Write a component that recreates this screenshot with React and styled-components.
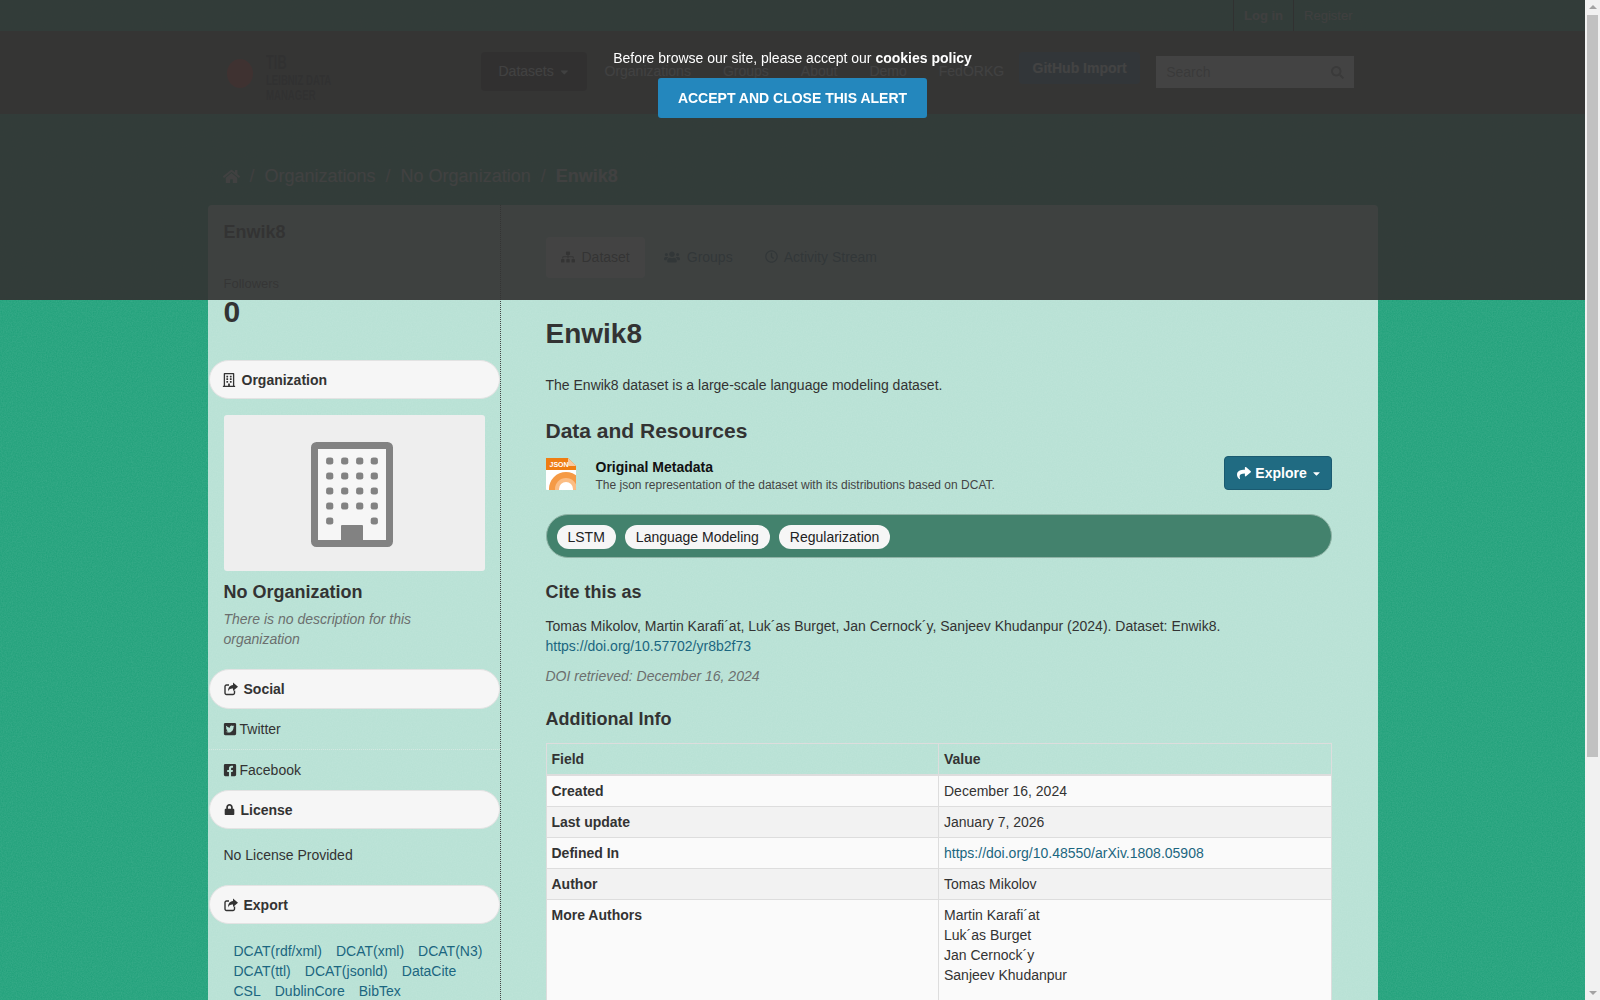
import React from "react";
import styled, { createGlobalStyle } from "styled-components";
import {
  FaHome,
  FaSitemap,
  FaUsers,
  FaRegClock,
  FaRegBuilding,
  FaTwitterSquare,
  FaFacebookSquare,
  FaLock,
  FaShare,
  FaSearch,
  FaCaretDown,
} from "react-icons/fa";

const noise = `url("data:image/svg+xml,%3Csvg xmlns='http://www.w3.org/2000/svg' width='200' height='200'%3E%3Cfilter id='n'%3E%3CfeTurbulence type='fractalNoise' baseFrequency='.8' numOctaves='2'/%3E%3CfeColorMatrix values='0 0 0 0 1 0 0 0 0 1 0 0 0 0 1 0 0 0 .12 0'/%3E%3C/filter%3E%3Crect width='200' height='200' filter='url(%23n)'/%3E%3C/svg%3E")`;

const GlobalStyle = createGlobalStyle`
  * { box-sizing: border-box; }
  body {
    margin: 0;
    padding-right: 15px;
    font-family: "Liberation Sans", Arial, sans-serif;
    font-size: 14px;
    line-height: 20px;
    color: #333;
    background-color: #1ea079;
    background-image: ${noise};
  }
  a { color: #1b6680; text-decoration: none; }
`;

const Container = styled.div`
  width: 1170px;
  margin: 0 auto;
`;

const ScrollTrack = styled.div`
  position: fixed;
  top: 0;
  right: 0;
  bottom: 0;
  width: 15px;
  z-index: 20;
  background: #f1f1f1;
`;
const ScrollThumb = styled.div`
  position: absolute;
  top: 15px;
  left: 2px;
  width: 11px;
  height: 742px;
  background: #c1c1c1;
`;
const ScrollArrow = styled.div`
  position: absolute;
  left: 3.5px;
  ${(props) => (props.$down ? "bottom: 5px;" : "top: 5px;")}
  width: 0;
  height: 0;
  border-left: 4px solid transparent;
  border-right: 4px solid transparent;
  ${(props) => (props.$down ? "border-top" : "border-bottom")}: 4px solid #a3a3a3;
`;

const Overlay = styled.div`
  position: fixed;
  top: 0;
  left: 0;
  right: 15px;
  height: 300px;
  z-index: 10;
  padding-top: 48px;
  display: flex;
  flex-direction: column;
  align-items: center;
  background: rgba(51, 51, 51, 0.92);
  color: #fff;
`;
const AcceptButton = styled.button`
  margin-top: 10px;
  height: 40px;
  padding: 0 20px;
  border: 0;
  border-radius: 3px;
  background: #2487bd;
  color: #fff;
  font: bold 14px "Liberation Sans", sans-serif;
  text-transform: uppercase;
`;

const TopBar = styled.div`
  height: 31px;
`;
const Account = styled(Container)`
  display: flex;
  justify-content: flex-end;
  padding-right: 15px;
`;
const AccountLink = styled.a`
  height: 31px;
  line-height: 31px;
  padding: 0 10px;
  border-left: 1px solid #222;
  font-size: 13px;
  font-weight: ${(props) => (props.$bold ? "bold" : "normal")};
  color: #ccc;
`;

const Masthead = styled.div`
  height: 83px;
  background: #4a4e49;
`;
const MastInner = styled(Container)`
  display: flex;
  align-items: flex-start;
  padding-top: 21px;
`;
const Logo = styled.div`
  width: 273px;
  padding-left: 19px;
  display: flex;
  align-items: flex-start;
  gap: 13px;
`;
const LogoMark = styled.div`
  width: 26px;
  height: 29px;
  margin-top: 7px;
  border-radius: 50%;
  background: #c9281c;
`;
const LogoText = styled.div`
  display: flex;
  flex-direction: column;
  color: #1c1c1c;
  font-size: 15px;
  font-weight: bold;
  line-height: 15px;
  white-space: nowrap;
  transform: scaleX(0.64);
  transform-origin: left;
  b {
    font-size: 20px;
    line-height: 20px;
  }
`;
const Nav = styled.nav`
  display: flex;
  align-items: flex-start;
`;
const NavLink = styled.a`
  height: 39px;
  padding: 0 16px;
  line-height: 39px;
  color: #e4e4e4;
`;
const DropLink = styled(NavLink)`
  width: 106px;
  padding: 0 18px;
  margin-right: 2px;
  display: flex;
  align-items: center;
  gap: 6px;
  border-radius: 4px;
  background: #1f1616;
`;
const ImportButton = styled.a`
  width: 121px;
  height: 32px;
  margin-left: -1px;
  border-radius: 4px;
  background: #2b5e80;
  color: #fff;
  font-weight: bold;
  line-height: 32px;
  text-align: center;
`;
const SearchBox = styled.div`
  width: 198px;
  height: 32px;
  margin: 4px 0 0 16px;
  padding: 0 10px;
  display: flex;
  align-items: center;
  justify-content: space-between;
  background: #fff;
  color: #888;
  font-size: 14px;
`;

const Breadcrumb = styled(Container)`
  height: 91px;
  padding: 33px 0 0 15px;
  display: flex;
  align-items: center;
  gap: 10px;
  font-size: 18px;
  color: #e4e4e4;
`;
const Crumb = styled.span`
  font-weight: ${(props) => (props.$active ? "bold" : "normal")};
`;
const Slash = styled.span`
  color: #ccc;
`;

const Panel = styled(Container)`
  display: flex;
  border-radius: 4px 4px 0 0;
  background: rgba(255, 255, 255, 0.68);
`;
const Sidebar = styled.aside`
  width: 293px;
  flex: none;
  padding: 15px 0 30px 1px;
  border-right: 1px dotted #444;
`;
const DatasetName = styled.h2`
  margin: 0 15px;
  font-size: 18px;
  line-height: 24px;
`;
const FollowLabel = styled.div`
  margin: 30px 15px 0;
  font-size: 13px;
  color: #555;
`;
const FollowCount = styled.div`
  margin: 1px 15px 0;
  font-size: 30px;
  line-height: 34px;
  font-weight: bold;
`;
const Pill = styled.h3`
  height: ${(props) => props.$height || 39}px;
  margin: ${(props) => props.$top || 0}px 0 0;
  padding-left: ${(props) => props.$pad || 14}px;
  display: flex;
  align-items: center;
  gap: 6px;
  border: 1px solid #e3e3e3;
  border-radius: 20px;
  background: #f6f6f6;
  font-size: 14px;
  line-height: 20px;
`;
const OrgImage = styled.div`
  width: 261px;
  height: 156px;
  margin: 16px 0 0 15px;
  padding: 27px 0 0 87px;
  border-radius: 3px;
  background: #eee;
`;
const OrgName = styled.h3`
  margin: 9px 15px 0;
  font-size: 18px;
  line-height: 24px;
`;
const OrgText = styled.p`
  margin: 5px 15px 20px;
  font-style: italic;
  color: #6b6f6e;
`;
const SocialItem = styled.div`
  height: ${(props) => (props.$last ? 40 : 41)}px;
  padding: 10px 15px 0 14px;
  display: flex;
  gap: 3px;
  align-items: flex-start;
  line-height: 20px;
  border-bottom: ${(props) => (props.$last ? "0" : "1px dotted #d5e8e1")};
  svg {
    margin-top: 3px;
  }
`;
const LicenseText = styled.p`
  margin: 16px 15px 20px;
`;
const ExportLinks = styled.div`
  margin: 17px 15px 0 25px;
  display: flex;
  flex-wrap: wrap;
  column-gap: 14px;
`;

const Main = styled.main`
  flex: 1;
  padding: 32px 46px 0 45px;
`;
const Tabs = styled.ul`
  margin: 0;
  padding: 0;
  list-style: none;
  display: flex;
  gap: 4px;
`;
const Tab = styled.li`
  height: 41px;
  padding: 0 15px 2px ${(props) => props.$left || 15}px;
  display: flex;
  align-items: center;
  gap: ${(props) => props.$gap || 7}px;
  border-radius: 4px;
  background: ${(props) => (props.$active ? "#fff" : "none")};
  color: ${(props) => (props.$active ? "#444" : "#2a6478")};
`;
const Title = styled.h1`
  margin: 38px 0 0;
  font-size: 28px;
  line-height: 36px;
`;
const Lead = styled.p`
  margin: 23px 0 0;
`;
const SectionTitle = styled.h2`
  margin: 22px 0 0;
  font-size: 21px;
  line-height: 28px;
`;
const SubTitle = styled.h3`
  margin: ${(props) => props.$top}px 0 0;
  font-size: 18px;
  line-height: 24px;
`;
const Resource = styled.div`
  margin-top: 11px;
  height: 34px;
  display: flex;
  align-items: flex-start;
  justify-content: space-between;
`;
const ResourceInfo = styled.div`
  display: flex;
  gap: 20px;
  svg {
    margin-top: 2px;
  }
`;
const ResourceName = styled.div`
  font-weight: bold;
  color: #111;
  line-height: 20px;
  margin-top: 1px;
`;
const ResourceNote = styled.div`
  font-size: 12px;
  line-height: 16px;
  color: #444;
`;
const ExploreButton = styled.button`
  width: 108px;
  height: 34px;
  padding: 0 0 0 4px;
  display: flex;
  align-items: center;
  justify-content: center;
  gap: 4px;
  border: 1px solid #1a5a70;
  border-radius: 4px;
  background: #206b82;
  color: #fff;
  font: bold 14px "Liberation Sans", sans-serif;
`;
const TagBar = styled.div`
  height: 44px;
  margin-top: 24px;
  padding: 2px 10px 0;
  display: flex;
  align-items: center;
  gap: 9px;
  border: 1px solid #8fb3a6;
  border-radius: 22px;
  background: #43826d;
`;
const Tag = styled.span`
  height: 24px;
  padding: 0 11px;
  line-height: 24px;
  border-radius: 12px;
  background: #f6f6f6;
  color: #222;
`;
const Citation = styled.p`
  margin: 12px 0 0;
`;
const Retrieved = styled.p`
  margin: 10px 0 0;
  font-style: italic;
  color: #6b6f6e;
`;
const Table = styled.table`
  width: 786px;
  margin-top: 12px;
  border-collapse: collapse;
  table-layout: fixed;
`;
const Th = styled.th`
  padding: 5px;
  height: 31px;
  border: 1px solid #ddd;
  border-bottom-width: 2px;
  text-align: left;
`;
const Td = styled.td`
  padding: 5px;
  border: 1px solid #ddd;
  vertical-align: top;
  font-weight: ${(props) => (props.$head ? "bold" : "normal")};
`;
const Row = styled.tr`
  background: ${(props) => (props.$even ? "#f2f2f2" : "#fafafa")};
`;
const Footer = styled.footer`
  height: 90px;
  margin-top: 30px;
`;

function ShareIcon() {
  return (
    <svg width="14" height="14" viewBox="0 0 14 14">
      <path
        d="M10.5 8.5V11a1.5 1.5 0 0 1-1.5 1.5H2.5A1.5 1.5 0 0 1 1 11V4.5A1.5 1.5 0 0 1 2.5 3H5"
        fill="none"
        stroke="currentColor"
        strokeWidth="1.4"
      />
      <path d="M9 .5L14 4.7 9 9V6.5C6.5 6.3 5 7 4 9.5 4 6 5.5 3.3 9 3Z" fill="currentColor" />
    </svg>
  );
}

function BuildingPlaceholder() {
  const xs = [18.7, 33.7, 48.7, 63.3];
  const ys = [19, 34, 49, 64];
  const windows = [];
  ys.forEach((y) => xs.forEach((x) => windows.push([x, y])));
  windows.push([18.7, 79], [63.3, 79]);
  return (
    <svg width="82" height="105" viewBox="0 0 82 105">
      <rect x="3.5" y="3.5" width="75" height="98" rx="2" fill="#f6f6f6" stroke="#828282" strokeWidth="7" />
      {windows.map(([x, y]) => (
        <rect key={`${x}-${y}`} x={x - 3.6} y={y - 3.6} width="7.2" height="7.2" rx="2.4" fill="#828282" />
      ))}
      <rect x="30" y="83" width="22" height="22" rx="1" fill="#828282" />
    </svg>
  );
}

function JsonIcon() {
  return (
    <svg width="30" height="32" viewBox="0 0 30 32">
      <defs>
        <clipPath id="sheet">
          <rect x="0" y="12" width="30" height="20" rx="1" />
        </clipPath>
      </defs>
      <rect x="0" y="10" width="30" height="22" rx="1" fill="#fff" />
      <g clipPath="url(#sheet)">
        <circle cx="20" cy="31" r="17" fill="#f59a45" />
        <circle cx="20" cy="31" r="11" fill="#fbbd84" />
        <circle cx="20" cy="31" r="7" fill="#fff" />
      </g>
      <path d="M0 0H22L30 8V12H0Z" fill="#ef7d12" />
      <path d="M22 0L30 8H23Q22 8 22 7Z" fill="#f8c9a0" />
      <text x="3.5" y="8.5" fontSize="7" fontWeight="bold" fontFamily="Liberation Sans" fill="#fff">
        JSON
      </text>
    </svg>
  );
}

const rows = [
  ["Created", "December 16, 2024"],
  ["Last update", "January 7, 2026"],
  ["Defined In", <a href="#doi">https://doi.org/10.48550/arXiv.1808.05908</a>],
  ["Author", "Tomas Mikolov"],
  [
    "More Authors",
    <>
      Martin Karafi´at
      <br />
      Luk´as Burget
      <br />
      Jan Cernock´y
      <br />
      Sanjeev Khudanpur
      <br />
      &nbsp;
    </>,
  ],
  ["Source", <a href="#src">https://github.com/tomsercu/lstm</a>],
  ["Version", "1.0"],
  ["Language", "English"],
];

export default function App() {
  return (
    <>
      <GlobalStyle />
      <ScrollTrack>
        <ScrollArrow />
        <ScrollThumb />
        <ScrollArrow $down />
      </ScrollTrack>
      <Overlay>
        <div>
          Before browse our site, please accept our <b>cookies policy</b>
        </div>
        <AcceptButton>Accept and close this alert</AcceptButton>
      </Overlay>

      <TopBar>
        <Account>
          <AccountLink href="#login" $bold>
            Log in
          </AccountLink>
          <AccountLink href="#register">Register</AccountLink>
        </Account>
      </TopBar>

      <Masthead>
        <MastInner>
          <Logo>
            <LogoMark />
            <LogoText>
              <b>TIB</b>
              <span>LEIBNIZ DATA</span>
              <span>MANAGER</span>
            </LogoText>
          </Logo>
          <Nav>
            <DropLink href="#datasets">
              Datasets <FaCaretDown size={12} />
            </DropLink>
            <NavLink href="#organizations">Organizations</NavLink>
            <NavLink href="#groups">Groups</NavLink>
            <NavLink href="#about">About</NavLink>
            <NavLink href="#demo">Demo</NavLink>
            <NavLink href="#fedorkg">FedORKG</NavLink>
            <ImportButton href="#import">GitHub Import</ImportButton>
            <SearchBox>
              Search
              <FaSearch size={13} />
            </SearchBox>
          </Nav>
        </MastInner>
      </Masthead>

      <Breadcrumb>
        <FaHome size={17} />
        <Slash>/</Slash>
        <Crumb>Organizations</Crumb>
        <Slash>/</Slash>
        <Crumb>No Organization</Crumb>
        <Slash>/</Slash>
        <Crumb $active>Enwik8</Crumb>
      </Breadcrumb>

      <Panel>
        <Sidebar>
          <DatasetName>Enwik8</DatasetName>
          <FollowLabel>Followers</FollowLabel>
          <FollowCount>0</FollowCount>

          <Pill $top={31} $pad={12}>
            <FaRegBuilding size={14} /> Organization
          </Pill>
          <OrgImage>
            <BuildingPlaceholder />
          </OrgImage>
          <OrgName>No Organization</OrgName>
          <OrgText>There is no description for this organization</OrgText>

          <Pill $height={40}>
            <ShareIcon /> Social
          </Pill>
          <SocialItem>
            <FaTwitterSquare size={14} /> Twitter
          </SocialItem>
          <SocialItem $last>
            <FaFacebookSquare size={14} /> Facebook
          </SocialItem>

          <Pill>
            <FaLock size={11} /> License
          </Pill>
          <LicenseText>No License Provided</LicenseText>

          <Pill>
            <ShareIcon /> Export
          </Pill>
          <ExportLinks>
            <a href="#rdf">DCAT(rdf/xml)</a>
            <a href="#xml">DCAT(xml)</a>
            <a href="#n3">DCAT(N3)</a>
            <a href="#ttl">DCAT(ttl)</a>
            <a href="#jsonld">DCAT(jsonld)</a>
            <a href="#datacite">DataCite</a>
            <a href="#csl">CSL</a>
            <a href="#dublin">DublinCore</a>
            <a href="#bibtex">BibTex</a>
          </ExportLinks>
        </Sidebar>

        <Main>
          <Tabs>
            <Tab $active>
              <FaSitemap size={14} /> Dataset
            </Tab>
            <Tab>
              <FaUsers size={16} /> Groups
            </Tab>
            <Tab $gap={6} $left={13}>
              <FaRegClock size={13} /> Activity Stream
            </Tab>
          </Tabs>

          <Title>Enwik8</Title>
          <Lead>The Enwik8 dataset is a large-scale language modeling dataset.</Lead>

          <SectionTitle>Data and Resources</SectionTitle>
          <Resource>
            <ResourceInfo>
              <JsonIcon />
              <div>
                <ResourceName>Original Metadata</ResourceName>
                <ResourceNote>
                  The json representation of the dataset with its distributions based on DCAT.
                </ResourceNote>
              </div>
            </ResourceInfo>
            <ExploreButton>
              <FaShare size={14} /> Explore <FaCaretDown size={11} />
            </ExploreButton>
          </Resource>

          <TagBar>
            <Tag>LSTM</Tag>
            <Tag>Language Modeling</Tag>
            <Tag>Regularization</Tag>
          </TagBar>

          <SubTitle $top={22}>Cite this as</SubTitle>
          <Citation>
            Tomas Mikolov, Martin Karafi´at, Luk´as Burget, Jan Cernock´y, Sanjeev Khudanpur (2024).
            Dataset: Enwik8.
            <br />
            <a href="#cite">https://doi.org/10.57702/yr8b2f73</a>
          </Citation>
          <Retrieved>DOI retrieved: December 16, 2024</Retrieved>

          <SubTitle $top={21}>Additional Info</SubTitle>
          <Table>
            <thead>
              <tr>
                <Th>Field</Th>
                <Th>Value</Th>
              </tr>
            </thead>
            <tbody>
              {rows.map(([field, value], i) => (
                <Row key={field} $even={i % 2 === 1}>
                  <Td $head>{field}</Td>
                  <Td>{value}</Td>
                </Row>
              ))}
            </tbody>
          </Table>
          <Footer />
        </Main>
      </Panel>
    </>
  );
}
